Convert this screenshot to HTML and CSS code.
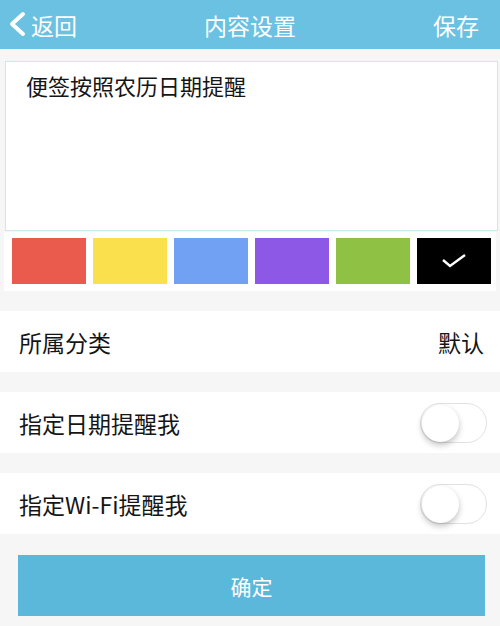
FILE: index.html
```html
<!DOCTYPE html>
<html lang="zh-CN">
<head>
  <meta charset="UTF-8">
  <meta name="viewport" content="width=device-width, initial-scale=1.0">
  <title>内容设置</title>
  <link rel="stylesheet" href="styles.css">
</head>
<body>

  <header class="topbar">
    <a class="back" href="#">
      <svg class="back-icon" width="18" height="26" viewBox="0 0 18 26">
        <path d="M15 3 L4 13 L15 23" fill="none" stroke="#fff" stroke-width="4" stroke-linecap="round" stroke-linejoin="round"/>
      </svg>
      <span>返回</span>
    </a>
    <h1 class="title">内容设置</h1>
    <a class="save" href="#">保存</a>
  </header>

  <main>
    <div class="note">便签按照农历日期提醒</div>

    <div class="colors">
      <span class="swatch red"></span>
      <span class="swatch yellow"></span>
      <span class="swatch blue"></span>
      <span class="swatch purple"></span>
      <span class="swatch green"></span>
      <span class="swatch black">
        <svg width="26" height="16" viewBox="0 0 26 16">
          <path d="M2 7 L9 13 L24 2" fill="none" stroke="#fff" stroke-width="2.4"/>
        </svg>
      </span>
    </div>

    <div class="row">
      <span>所属分类</span>
      <span class="value">默认</span>
    </div>

    <div class="row">
      <span>指定日期提醒我</span>
      <span class="switch"><span class="knob"></span></span>
    </div>

    <div class="row">
      <span>指定Wi-Fi提醒我</span>
      <span class="switch"><span class="knob"></span></span>
    </div>

    <button class="confirm">确定</button>
  </main>

</body>
</html>
```

FILE: styles.css
```css
body {
  margin: 0;
  background-color: #f6f6f6;
  font-family: "Noto Sans CJK SC", "DejaVu Sans", sans-serif;
  color: #151515;
}
.topbar {
  height: 49px;
  background-color: #6bc1e1;
  display: flex;
  align-items: center;
  justify-content: space-between;
  padding: 0 21px 0 8px;
  position: relative;
}
.topbar a {
  color: #fff;
  text-decoration: none;
  font-size: 23px;
}
.back {
  display: flex;
  align-items: center;
  gap: 5px;
}
.back-icon {
  margin-top: -1px;
}
.title {
  position: absolute;
  left: 0;
  right: 0;
  margin: 0;
  text-align: center;
  font-size: 23px;
  font-weight: normal;
  color: #fff;
  pointer-events: none;
}
.note {
  margin: 12px 2px 0 5px;
  height: 160px;
  background-color: #fff;
  border: 1px solid #c9e8f2;
  padding: 8px 20px 0 20px;
  font-size: 22px;
  line-height: 30px;
}
.colors {
  margin: 1px 4px 0 4px;
  padding: 6px 5px 7px 8px;
  background-color: #fff;
  display: flex;
  gap: 7px;
}
.swatch {
  width: 74px;
  height: 46px;
  display: flex;
  align-items: center;
  justify-content: center;
}
.red { background-color: #ea5a4d; }
.yellow { background-color: #fbe04e; }
.blue { background-color: #71a1f3; }
.purple { background-color: #8e58e6; }
.green { background-color: #8fc244; }
.black { background-color: #000; }
.row {
  margin-top: 20px;
  height: 61px;
  background-color: #fff;
  display: flex;
  align-items: center;
  justify-content: space-between;
  padding: 0 13px 0 19px;
  font-size: 23px;
}
.value {
  margin-right: 3px;
}
.switch {
  width: 67px;
  height: 40px;
  border: 1px solid #e2e2e2;
  border-radius: 21px;
  background-color: #fff;
  position: relative;
  box-sizing: border-box;
}
.knob {
  position: absolute;
  left: 1px;
  top: 1px;
  width: 37px;
  height: 37px;
  border-radius: 50%;
  background-color: #fff;
  box-shadow: 0 3px 6px rgba(0, 0, 0, 0.25);
}
.confirm {
  display: block;
  margin: 21px 15px 0 18px;
  width: 467px;
  height: 61px;
  border: none;
  background-color: #5bb8db;
  color: #fff;
  font-family: "Noto Sans CJK SC", "DejaVu Sans", sans-serif;
  font-size: 21px;
}
```
